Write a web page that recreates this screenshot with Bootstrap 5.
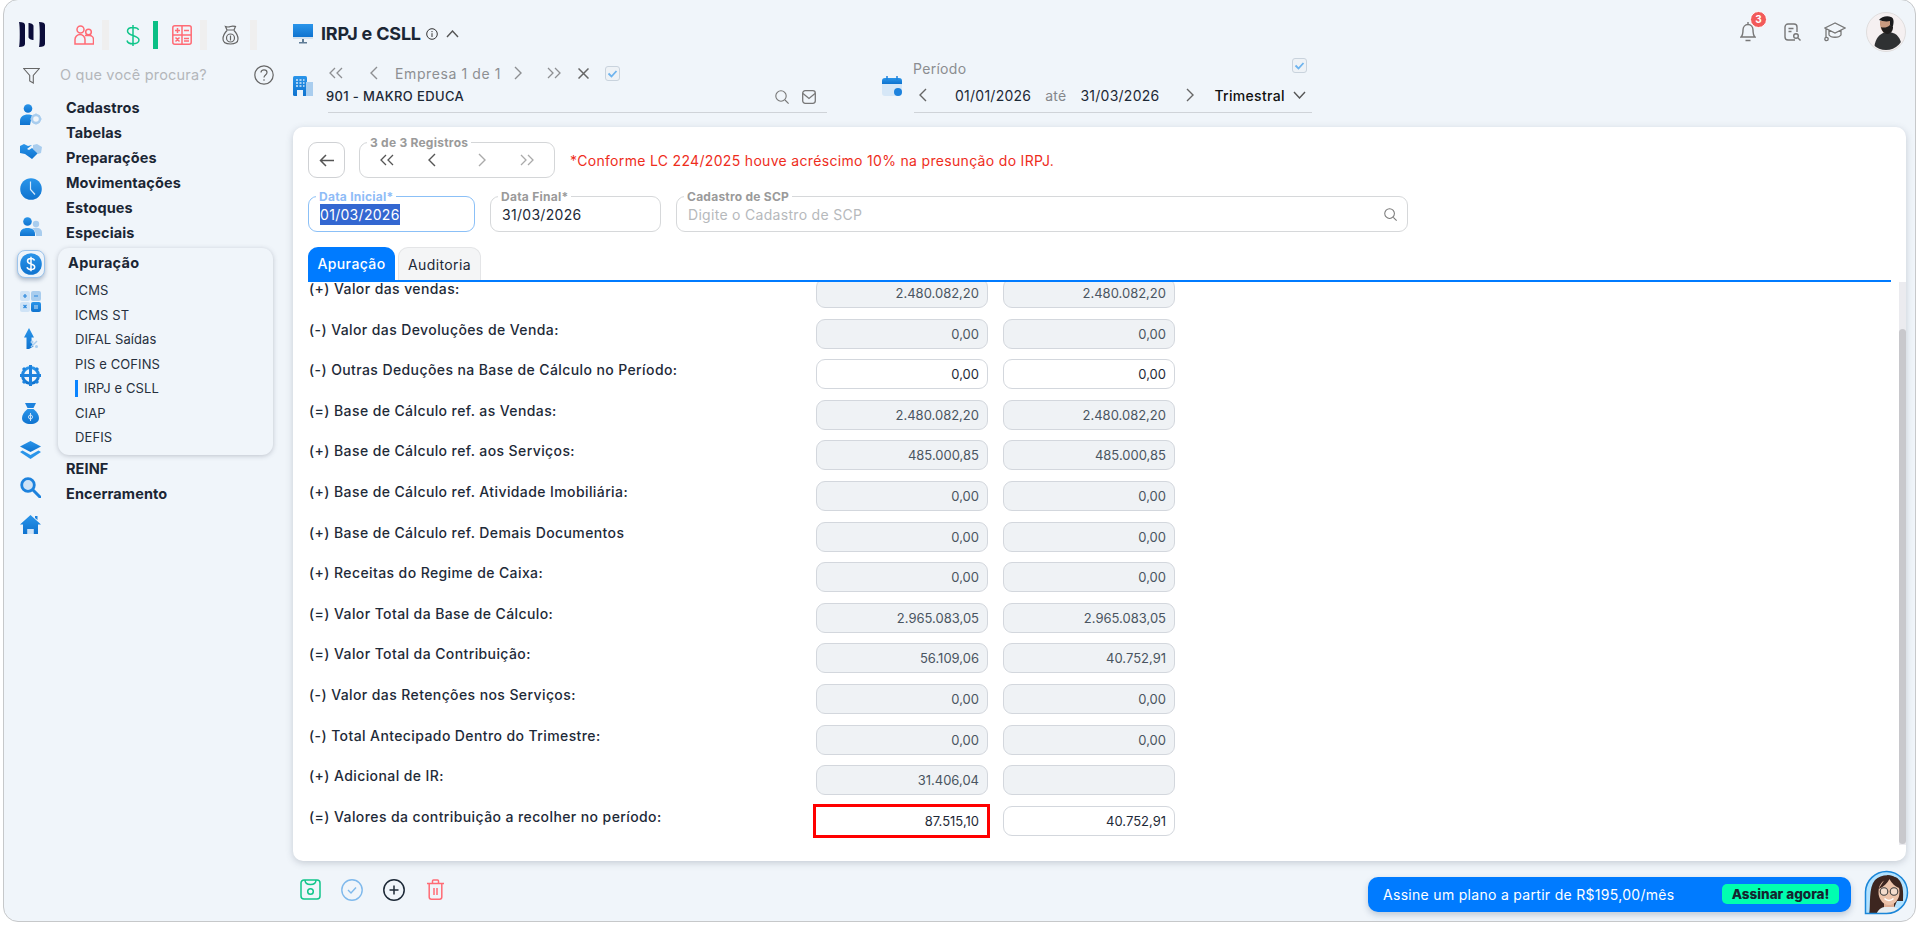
<!DOCTYPE html>
<html lang="pt-BR">

<head>
    <meta charset="UTF-8">
    <meta name="viewport" content="width=device-width, initial-scale=1.0">
    <title>IRPJ e CSLL</title>
    <link href="https://cdn.jsdelivr.net/npm/bootstrap@5.3.0/dist/css/bootstrap.min.css" rel="stylesheet">
    <style>
        html, body { height: 100%; overflow: hidden; background: #fff; }
        body { font-family: Inter, "Liberation Sans", sans-serif; color: #1c2836; font-size: 14px; }
        .app-frame { margin: -1px 0 0 3px; width: 1913px; height: 923px; background: #f0f5fa; border: 1.5px solid #c6c8ca; border-radius: 15px; overflow: hidden; }

        /* sidebar */
        .side-col { width: 289px; flex: none; }
        .top-icons { height: 30px; margin-top: 20px; padding-left: 15px; }
        .top-icons svg { flex: none; }
        .grey-tab { width: 7px; height: 30px; background: #efefef; flex: none; }
        .green-tab { width: 5px; height: 28px; background: #0bbf85; flex: none; }
        .search-line { height: 26px; margin-top: 12px; padding-left: 19px; }
        .search-text { margin-left: 20px; width: 194px; color: #b4b7bb; font-size: 14.5px; letter-spacing: .2px; }
        .icon-col { width: 54px; flex: none; margin-top: 8px; }
        .icon-slot { height: 37.3px; padding-right: 1px; }
        .icon-active { width: 28px; height: 28px; border: 1px solid #9cc4ec; border-radius: 8px; box-shadow: 0 2px 4px rgba(40, 70, 110, .35); background: #eef4fa; }
        .menu-col { margin-top: 7px; padding-left: 8px; }
        .menu-main { height: 25px; line-height: 25px; font-weight: 700; font-size: 14.5px; color: #1b2634; letter-spacing: .1px; }
        .apur-panel { margin: 3px 0 1px -8px; width: 215px; height: 207px; border-radius: 11px; background: #f0f5fa; box-shadow: 0 1px 5px rgba(60, 70, 90, .28); padding: 3px 0 0 10px; }
        .apur-panel .menu-main { height: 24px; line-height: 24px; letter-spacing: .3px; }
        .apur-item { height: 24.5px; line-height: 24.5px; margin-left: 7px; font-size: 13px; color: #26303d; letter-spacing: .1px; }
        .apur-panel .apur-head { margin-bottom: 3px; }
        .apur-current { display: inline-block; border-left: 3px solid #0a84ff; height: 17px; line-height: 17px; padding-left: 6px; }

        /* header */
        .main-col { width: 1613px; flex: none; }
        .head-top { height: 39px; margin-top: 12.5px; }
        .head-left { padding-top: 3px; }
        .page-title { font-size: 18px; font-weight: 700; letter-spacing: -.2px; margin: 0 5px 0 8px; color: #1b2634; line-height: 1; }
        .bell-wrap { width: 18px; height: 22px; margin-right: 26px; }
        .bell-count { position: absolute; top: -10px; left: 10px; width: 17px; height: 17px; border-radius: 50%; background: #f25a5a; color: #fff; font-size: 10px; font-weight: 700; border: 1.5px solid #fff; line-height: 14px; text-align: center; }
        .head-pick { height: 57px; margin-top: 4.5px; }
        .emp-block { width: 535px; flex: none; }
        .emp-body { width: 499px; height: 57px; margin-left: 15px; border-bottom: 1px solid #cfd3d8; }
        .emp-nav { height: 22px; margin-top: 6px; padding-left: 1px; color: #8d8f92; font-size: 14px; letter-spacing: .6px; }
        .emp-name { height: 26px; margin-left: -2px; font-size: 13px; font-weight: 500; color: #1c2836; letter-spacing: .35px; }
        .tick-box { width: 15px; height: 15px; border: 1px solid #c9d3dd; border-radius: 3px; background: #eef2f6; line-height: 0; }
        .per-block { width: 430px; flex: none; margin-left: 54px; }
        .per-body { width: 398px; margin-left: 12px; border-bottom: 1px solid #cfd3d8; height: 57px; }
        .per-label { height: 25px; padding-top: 2px; color: #8b8d90; font-size: 14px; letter-spacing: .3px; }
        .per-row { height: 28px; font-size: 14px; letter-spacing: .25px; }
        .per-ate { color: #84878b; }
        .per-kind { font-weight: 500; font-size: 14px; color: #111; letter-spacing: .3px; }

        /* card */
        .work-card { height: 734px; margin-top: 14px; background: #fff; border-radius: 10px; box-shadow: 0 2px 7px rgba(70, 85, 105, .25); padding: 15px 0 0 15px; }
        .back-btn { width: 37px; height: 36px; border: 1px solid #cfd1d4; border-radius: 9px; background: #fff; padding: 0; margin-right: 14px; line-height: 0; }
        .reg-box { width: 196px; height: 36px; border: 1px solid #d4d6d8; border-radius: 9px; margin-right: 15px; padding-left: 20px; }
        .float-tag { position: absolute; top: -7px; left: 7px; background: #fff; padding: 0 3px; font-size: 12px; line-height: 13px; font-weight: 700; color: #9a9a9a; white-space: nowrap; letter-spacing: .25px; }
        .red-note { color: #ee2d1c; font-size: 14px; letter-spacing: .32px; }
        .field-row { margin-top: 18px; }
        .float-field { height: 36px; border: 1px solid #d6d8da; border-radius: 9px; padding: 7px 0 0 11px; margin-right: 15px; font-size: 14px; letter-spacing: .3px; line-height: 21px; }
        .f-start { width: 167px; border-color: #8bc0f7; }
        .f-start .float-tag { color: #8fbcf7; }
        .f-end { width: 171px; }
        .f-scp { width: 732px; margin: 0; color: #b6b9bc; padding-right: 10px; }
        .sel-val { background: #3367d1; color: #fff; display: inline-block; line-height: 21px; }
        .tab-row { margin: 15px 15px 0 0; height: 35px; border-bottom: 2px solid #007bff; gap: 3px; }
        .tab-on, .tab-off { height: 33px; border-radius: 10px 10px 0 0; font-size: 14px; padding: 0; line-height: 33px; text-align: center; letter-spacing: .4px; }
        .tab-on { width: 87px; background: #007bff; color: #fff; font-weight: 500; border: 0; }
        .tab-off { width: 83px; background: #f4f5f6; border: 1px solid #e4e5e7; border-bottom: 0; color: #1c2836; }
        .value-wrap { height: 563px; }
        .value-area { overflow: hidden; }
        .value-rows { margin-top: -4px; }
        .fake-track { width: 7px; flex: none; background: #ebebef; }
        .fake-thumb { height: 515px; margin-top: 47px; background: #c8c8cc; border-radius: 4px; }
        .value-row { height: 40.6px; }
        .value-label { width: 508px; flex: none; padding: 4px 0 0 1px; line-height: 14px; font-size: 14px; font-weight: 500; color: #1e2a38; letter-spacing: .4px; }
        .value-input { height: 30px; width: 172px; flex: none; margin-right: 15px; padding: 0 8px; border: 1px solid #d3d7dd; border-radius: 9px; background: #fff; text-align: right; font-size: 13px; color: #1e2a38; outline: none; font-family: inherit; }
        .value-input[readonly] { background: #eff2f5; color: #4a5561; }
        .value-input.value-red { width: 173px; margin-left: -1px; outline: 3px solid #f00; outline-offset: -1px; border-radius: 0; background: #fff; color: #1e2a38; }

        /* footer */
        .foot-row { height: 60px; padding-top: 15.5px; }
        .foot-icons { gap: 20px; padding-left: 7px; margin-top: 2px; }
        .promo-bar { width: 483px; height: 35px; margin-left: auto; background: #007bff; border-radius: 10px; color: #fff; font-size: 14px; padding: 0 12px 0 15px; box-shadow: 0 3px 6px rgba(40, 70, 110, .25); letter-spacing: .3px; }
        .promo-btn { background: #00ffb0; color: #16242f; border: 0; height: 20px; line-height: 20px; border-radius: 5px; font-weight: 800; font-size: 13.5px; padding: 0; width: 117px; letter-spacing: 0; }
        .promo-face { width: 45px; height: 45px; margin: -7px -3px 0 13px; flex: none; }
    </style>
</head>

<body>
    <svg width="0" height="0" class="d-block">
        <defs>
            <linearGradient id="blueGrad" x1="0" y1="0" x2="0" y2="1"><stop offset="0" stop-color="#2a95ea"/><stop offset="1" stop-color="#0f73cf"/></linearGradient>
            <symbol id="dbl-left" viewBox="0 0 14 12"><path d="M6 1 1 6l5 5M13 1 8 6l5 5" fill="none" stroke="currentColor" stroke-width="1.3"/></symbol>
            <symbol id="dbl-right" viewBox="0 0 14 12"><path d="m1 1 5 5-5 5M8 1l5 5-5 5" fill="none" stroke="currentColor" stroke-width="1.3"/></symbol>
            <symbol id="one-left" viewBox="0 0 8 14"><path d="M7 1 1 7l6 6" fill="none" stroke="currentColor" stroke-width="1.4"/></symbol>
            <symbol id="one-right" viewBox="0 0 8 14"><path d="m1 1 6 6-6 6" fill="none" stroke="currentColor" stroke-width="1.4"/></symbol>
            <symbol id="tick" viewBox="0 0 13 13"><path d="m2.500 6.500 3 3 5-5.500" fill="none" stroke="#6db3ee" stroke-width="1.800"/></symbol>
        </defs>
    </svg>

    <div class="app-frame d-flex">
        <!-- menu lateral -->
        <div class="side-col">
            <div class="top-icons d-flex align-items-center">
                <svg width="26" height="26" viewBox="0 0 26 26"><path d="M0 0c4 0 6 1 6 3v19c0 2-2 3-6 3 1-4 1-21 0-25zM9.500 1c2 0 5 1 5 3v14c-2 0-5-1-5-3zM20 0c4 0 6 1 6 3v19c0 2-2 3-6 3 1-4 1-21 0-25z" fill="#0c0d3a"/></svg>
                <svg width="20" height="20" viewBox="0 0 20 20" fill="none" stroke="#ff6b75" stroke-width="1.500" style="margin-left:29px"><circle cx="6.500" cy="4.500" r="3.500"/><circle cx="14.500" cy="7" r="2.800"/><path d="M1 19v-4.500a5 5 0 0 1 10 0V19zM11 10.500h4.500a4 4 0 0 1 4 4V19H11"/></svg>
                <div class="grey-tab ms-2"></div>
                <svg width="14" height="21" viewBox="0 0 14 21" fill="none" stroke="#10c58a" stroke-width="1.500" style="margin-left:17px"><path d="M7 0v21M12.500 5C12 3 10 2.500 7 2.500 4 2.500 1.500 3.500 1.500 6S4 9.500 7 10.500s6 2 6 4.500-3 3.800-6 3.800-5.500-1-6-3.300"/></svg>
                <div class="green-tab" style="margin-left:13px"></div>
                <svg width="20" height="20" viewBox="0 0 20 20" fill="none" stroke="#ff6b75" stroke-width="1.500" style="margin-left:14px"><rect x=".8" y=".8" width="18.400" height="18.400" rx="2"/><path d="M10 1v18M1 10h18M3 5.500h5M5.500 3v5M12 5.500h5M3.500 12.500l4 4M7.500 12.500l-4 4M12 13.500h5M12 16h5"/></svg>
                <div class="grey-tab ms-2"></div>
                <svg width="17" height="20" viewBox="0 0 17 20" fill="none" stroke="#666" stroke-width="1.200" style="margin-left:15px"><path d="M5 5 3.500 1.500c2 .8 3 .8 5 0s3-.5 5 0L12 5M5 5h7M5 5.500C2.500 8 1 10.500 1 14c0 3.500 3 5 7.500 5S16 17.500 16 14c0-3.500-1.500-6-4-8.500"/><circle cx="8.500" cy="13" r="4"/><path d="M8.500 10.500v5"/></svg>
                <div class="grey-tab" style="margin-left:11px"></div>
            </div>
            <div class="search-line d-flex align-items-center">
                <svg width="17" height="17" viewBox="0 0 17 17" fill="none" stroke="#666" stroke-width="1.100"><path d="M.7 1.500h15.600l-6 7v7.500l-3.600-2v-5.500z"/></svg>
                <span class="search-text">O que você procura?</span>
                <svg width="20" height="20" viewBox="0 0 20 20" fill="none" stroke="#666" stroke-width="1.200"><circle cx="10" cy="10" r="9.200"/><path d="M7 7.500C7 5.500 8.500 4.800 10 4.800s3 1 3 2.700c0 2.500-3 2.500-3 5"/><path d="M10 14.200v1.500"/></svg>
            </div>
            <div class="d-flex">
                <div class="icon-col">
                    <div class="icon-slot d-flex align-items-center justify-content-center">
                        <svg width="22" height="21" viewBox="0 0 22 21"><circle cx="8" cy="4.500" r="4.300" fill="url(#blueGrad)"/><path d="M0 21v-4c0-4 3-6.500 8-6.500 2 0 3 .3 4 1l-2 9.500z" fill="url(#blueGrad)"/><circle cx="16" cy="15" r="4" fill="none" stroke="#a9cdee" stroke-width="2.400"/><path d="M16 9.500v2M16 18.500v2M10.500 15h2M19.500 15h2M12.500 11.500l1 1M18.500 17.500l1 1M19.500 11.500l-1 1M13.500 17.500l-1 1" stroke="#a9cdee" stroke-width="1.500"/></svg>
                    </div>
                    <div class="icon-slot d-flex align-items-center justify-content-center">
                        <svg width="22" height="16" viewBox="0 0 22 16"><path d="M0 2 4 0l4 2 4-1-5 4 2 1 3-2 6 5-6 6-7-5-5-1z" fill="url(#blueGrad)"/><path d="m13 1 4-1 5 3-1 6-3 1-5-5z" fill="#a9cdee"/></svg>
                    </div>
                    <div class="icon-slot d-flex align-items-center justify-content-center">
                        <svg width="22" height="22" viewBox="0 0 22 22"><circle cx="11" cy="11" r="10.800" fill="url(#blueGrad)"/><path d="M10.500 3.500v8l4.500 5" fill="none" stroke="#d5e8fa" stroke-width="1.200"/></svg>
                    </div>
                    <div class="icon-slot d-flex align-items-center justify-content-center">
                        <svg width="22" height="19" viewBox="0 0 22 19"><circle cx="7.500" cy="4.500" r="4.300" fill="url(#blueGrad)"/><path d="M0 19v-2c0-4 3-6 7.500-6s7.500 2 7.500 6v2z" fill="url(#blueGrad)"/><circle cx="16" cy="7" r="3.200" fill="#a9cdee"/><path d="M12 11.500c4-1.500 10-.5 10 4v3.500h-6c0-3-1-6-4-7.500z" fill="#a9cdee"/></svg>
                    </div>
                    <div class="icon-slot d-flex align-items-center justify-content-center">
                        <div class="icon-active d-flex align-items-center justify-content-center">
                            <svg width="22" height="22" viewBox="0 0 22 22"><circle cx="11" cy="11" r="10.800" fill="url(#blueGrad)"/><path d="M14.500 7.500C14 6 12.500 5.500 11 5.500 9 5.500 7.500 6.500 7.500 8s1.500 2.500 3.500 3 3.700 1.300 3.700 3-1.700 2.500-3.700 2.500-3.500-.7-4-2.300M11 3.800v14.400" fill="none" stroke="#fff" stroke-width="1.500"/></svg>
                        </div>
                    </div>
                    <div class="icon-slot d-flex align-items-center justify-content-center">
                        <svg width="21" height="21" viewBox="0 0 21 21"><rect width="10" height="10" rx="2" fill="#cfe3f6"/><rect x="11" width="10" height="10" rx="2" fill="#a9cdee"/><rect y="11" width="10" height="10" rx="2" fill="#cfe3f6"/><rect x="11" y="11" width="10" height="10" rx="2" fill="url(#blueGrad)"/><path d="M3 5h4M5 3v4M14 5h4M3.500 14l3 3M6.500 14l-3 3" stroke="#2a88dd" stroke-width="1.200"/><path d="M14 15h4M14 17h4" stroke="#cfe3f6" stroke-width="1.200"/></svg>
                    </div>
                    <div class="icon-slot d-flex align-items-center justify-content-center">
                        <svg width="14" height="21" viewBox="0 0 14 21"><path d="M2.500 21V9.500H0L5 0l5 9.500H7.500c0 4 .5 7.500 2 9L5 21z" fill="url(#blueGrad)"/><path d="m7 19 6-6" stroke="#a9cdee" stroke-width="1.500"/><circle cx="8" cy="14" r="1.500" fill="#a9cdee"/><circle cx="12.500" cy="18.500" r="1.500" fill="#a9cdee"/></svg>
                    </div>
                    <div class="icon-slot d-flex align-items-center justify-content-center">
                        <svg width="21" height="21" viewBox="0 0 21 21"><circle cx="10.500" cy="10.500" r="8" fill="none" stroke="url(#blueGrad)" stroke-width="3"/><path d="M10.500 0v21M0 10.500h21" stroke="#1d82dd" stroke-width="3"/><path d="M3 3l2 2M16 16l2 2M3 18l2-2M16 5l2-2" stroke="#1d82dd" stroke-width="3"/></svg>
                    </div>
                    <div class="icon-slot d-flex align-items-center justify-content-center">
                        <svg width="17" height="21" viewBox="0 0 17 21"><path d="M3 0h11l-2.500 5h-6z" fill="#1d82dd"/><path d="M5.500 6h6C15 9 17 12 17 15c0 4-4 6-8.500 6S0 19 0 15c0-3 2-6 5.500-9z" fill="url(#blueGrad)"/><path d="M8.500 10v8" stroke="#cfe3f6" stroke-width="1"/><circle cx="8.500" cy="14" r="2" fill="none" stroke="#cfe3f6" stroke-width="1"/></svg>
                    </div>
                    <div class="icon-slot d-flex align-items-center justify-content-center">
                        <svg width="21" height="18" viewBox="0 0 21 18"><path d="M10.500 0 21 5.500 10.500 11 0 5.500z" fill="url(#blueGrad)"/><path d="M2.500 9.500 0 11l10.500 7L21 11l-2.500-1.500-8 4.500z" fill="#2a95ea"/></svg>
                    </div>
                    <div class="icon-slot d-flex align-items-center justify-content-center">
                        <svg width="21" height="21" viewBox="0 0 21 21"><circle cx="8" cy="8" r="6.300" fill="#cfe3f6" stroke="#1d82dd" stroke-width="2.800"/><path d="m13 13 7 7" stroke="#1d82dd" stroke-width="3" stroke-linecap="round"/></svg>
                    </div>
                    <div class="icon-slot d-flex align-items-center justify-content-center">
                        <svg width="21" height="19" viewBox="0 0 21 19"><path d="M10.500 0 21 9.500h-3V19h-4.500v-5h-6v5H3V9.500H0z" fill="url(#blueGrad)"/><path d="M15 1h2.500v4L15 3z" fill="#1d82dd"/><path d="M7.500 19v-5h6v5z" fill="#cfe3f6"/></svg>
                    </div>
                </div>
                <div class="menu-col flex-grow-1">
                    <div class="menu-main">Cadastros</div>
                    <div class="menu-main">Tabelas</div>
                    <div class="menu-main">Preparações</div>
                    <div class="menu-main">Movimentações</div>
                    <div class="menu-main">Estoques</div>
                    <div class="menu-main">Especiais</div>
                    <div class="apur-panel">
                        <div class="menu-main apur-head">Apuração</div>
                        <div class="apur-item">ICMS</div>
                        <div class="apur-item">ICMS ST</div>
                        <div class="apur-item">DIFAL Saídas</div>
                        <div class="apur-item">PIS e COFINS</div>
                        <div class="apur-item"><span class="apur-current">IRPJ e CSLL</span></div>
                        <div class="apur-item">CIAP</div>
                        <div class="apur-item">DEFIS</div>
                    </div>
                    <div class="menu-main">REINF</div>
                    <div class="menu-main">Encerramento</div>
                </div>
            </div>
        </div>

        <!-- conteudo -->
        <div class="main-col">
            <div class="head-top d-flex align-items-center">
                <div class="head-left d-flex align-items-center">
                    <svg width="20" height="20" viewBox="0 0 20 20"><rect x="0" y="0" width="20" height="13" fill="url(#blueGrad)"/><rect y="13" width="20" height="2" fill="#d5e2ee"/><path d="M9 15h2v3H9zM6 18h8v1.500H6z" fill="#607d96"/></svg>
                    <span class="page-title">IRPJ e CSLL</span>
                    <svg width="12" height="12" viewBox="0 0 12 12" fill="none" stroke="#333" stroke-width="1"><circle cx="6" cy="6" r="5.300"/><path d="M6 5.200v3.800M6 3v1.200"/></svg>
                    <svg class="ms-2" width="13" height="8" viewBox="0 0 13 8" fill="none" stroke="#555" stroke-width="1.400"><path d="m1 7 5.500-6L12 7"/></svg>
                </div>
                <div class="ms-auto d-flex align-items-center">
                    <div class="bell-wrap position-relative">
                        <svg class="d-block" width="16" height="21" viewBox="0 0 16 21" fill="none" stroke="#777" stroke-width="1.400"><path d="M8 1v2M1 16c2-2 2-4 2-7 0-3 2-5.500 5-5.500s5 2.500 5 5.500c0 3 0 5 2 7zM5.500 19.500h5"/></svg>
                        <span class="bell-count">3</span>
                    </div>
                    <svg width="17" height="18" viewBox="0 0 17 18" fill="none" stroke="#777" stroke-width="1.400"><path d="M11 17H4a3 3 0 0 1-3-3V4a3 3 0 0 1 3-3h6a3 3 0 0 1 3 3v5M4.500 5.500h5M4.500 8.500h3"/><circle cx="12" cy="13" r="2.300"/><path d="m14 15 2.500 2.500"/></svg>
                    <svg style="margin-left:23px" width="22" height="20" viewBox="0 0 22 20" fill="none" stroke="#777" stroke-width="1.300"><path d="M11 1 1 6l10 5 10-5zM5 8.500V13c2 3 10 3 12 0V8.500M2 6.500v9"/><circle cx="2.500" cy="17" r="1.700"/></svg>
                    <svg style="margin-left:20px" width="40" height="40" viewBox="0 0 40 40"><defs><clipPath id="manClip"><circle cx="20" cy="20" r="18"/></clipPath></defs><circle cx="20" cy="20" r="19.500" fill="#f5f0f1" stroke="#dfdddd" stroke-width="1"/><g clip-path="url(#manClip)"><path d="M8 40c0-10 3-16 9-19l4-2 6 2c6 2 9 8 9 19z" fill="#2f3133"/><path d="M14 9h11v7c0 2-1 4-3 5h-4l-3-4-1-4z" fill="#c99a80"/><path d="M13 8c2-3 8-5 12-3 3 1 3 5 2 9l-1 2-2-3V9c-4 1-8 0-11-1z" fill="#1a1a1c"/><path d="M15 15c2 1 6 1 9-2l3 2c0 4-2 6-5 7-3 0-6-2-7-7z" fill="#201e1e"/></g></svg>
                </div>
            </div>
            <div class="head-pick d-flex">
                <div class="emp-block d-flex">
                    <svg class="flex-none" width="20" height="20" viewBox="0 0 20 20" style="margin-top:20px"><rect width="14" height="20" rx="1.500" fill="url(#blueGrad)"/><rect x="13" y="6" width="7" height="14" fill="#a9cdee"/><rect x="4" y="14" width="6" height="6" fill="#e9f2fa"/><path d="M3 4h2M6.500 4h2M10 4h1.500M3 7h2M6.500 7h2M10 7h1.500M3 10h2M6.500 10h2M10 10h1.500" stroke="#d5e8fa" stroke-width="1.500"/></svg>
                    <div class="emp-body">
                        <div class="emp-nav d-flex align-items-center">
                            <svg width="14" height="12"><use href="#dbl-left"/></svg>
                            <svg width="8" height="14" style="margin-left:27px"><use href="#one-left"/></svg>
                            <span style="margin-left:17px">Empresa 1 de 1</span>
                            <svg width="8" height="14" style="margin-left:13px"><use href="#one-right"/></svg>
                            <svg width="14" height="12" style="margin-left:25px"><use href="#dbl-right"/></svg>
                            <svg width="11" height="11" viewBox="0 0 11 11" style="margin-left:17px" fill="none" stroke="#666" stroke-width="1.500"><path d="m.5.500 10 10M10.500.500l-10 10"/></svg>
                            <div class="tick-box" style="margin-left:16px"><svg width="13" height="13"><use href="#tick"/></svg></div>
                        </div>
                        <div class="emp-name d-flex align-items-center">
                            <span>901 - MAKRO EDUCA</span>
                            <svg class="ms-auto" width="14" height="14" viewBox="0 0 14 14" fill="none" stroke="#777" stroke-width="1.100"><circle cx="6" cy="6" r="5.200"/><path d="m10 10 3.600 3.600"/></svg>
                            <svg style="margin:0 11px 0 13px" width="14" height="14" viewBox="0 0 14 14" fill="none" stroke="#777" stroke-width="1.300"><rect x=".7" y=".7" width="12.600" height="12.600" rx="2.500"/><path d="m1 3.500 6 5 6-5"/></svg>
                        </div>
                    </div>
                </div>
                <div class="per-block d-flex">
                    <svg class="flex-none" style="margin-top:20px" width="20" height="20" viewBox="0 0 20 20"><rect y="2" width="20" height="18" rx="3" fill="#d6e7f7"/><path d="M0 8V5a3 3 0 0 1 3-3h14a3 3 0 0 1 3 3v3z" fill="url(#blueGrad)"/><path d="M5 0v4M15 0v4" stroke="#1d82dd" stroke-width="1.500"/><circle cx="16" cy="16" r="4" fill="#1d82dd"/></svg>
                    <div class="per-body flex-grow-1">
                        <div class="per-label d-flex justify-content-between">
                            <span style="margin-left:-1px">Período</span>
                            <div class="tick-box" style="margin:0 5px 0 0"><svg width="13" height="13"><use href="#tick"/></svg></div>
                        </div>
                        <div class="per-row d-flex align-items-center">
                            <svg style="color:#666;margin-left:5px" width="8" height="14"><use href="#one-left"/></svg>
                            <span style="margin-left:28px">01/01/2026</span>
                            <span class="per-ate" style="margin-left:14px">até</span>
                            <span style="margin-left:14px">31/03/2026</span>
                            <svg style="color:#666;margin-left:27px" width="8" height="14"><use href="#one-right"/></svg>
                            <span class="per-kind" style="margin-left:20px">Trimestral</span>
                            <svg class="ms-2" width="13" height="8" viewBox="0 0 13 8" fill="none" stroke="#555" stroke-width="1.400"><path d="m1 1 5.500 6L12 1"/></svg>
                        </div>
                    </div>
                </div>
            </div>

            <div class="work-card">
                <div class="d-flex align-items-center">
                    <button class="back-btn" type="button">
                        <svg width="15" height="13" viewBox="0 0 15 13" fill="none" stroke="#555" stroke-width="1.500"><path d="M7 1 1.500 6.500 7 12M1.500 6.500H15"/></svg>
                    </button>
                    <div class="reg-box position-relative d-flex align-items-center text-secondary">
                        <span class="float-tag">3 de 3 Registros</span>
                        <svg width="14" height="12" style="color:#555"><use href="#dbl-left"/></svg>
                        <svg width="8" height="14" style="margin-left:34px;color:#555"><use href="#one-left"/></svg>
                        <svg width="8" height="14" style="margin-left:42px;color:#aaa"><use href="#one-right"/></svg>
                        <svg width="14" height="12" style="margin-left:34px;color:#aaa"><use href="#dbl-right"/></svg>
                    </div>
                    <span class="red-note">*Conforme LC 224/2025 houve acréscimo 10% na presunção do IRPJ.</span>
                </div>
                <div class="field-row d-flex">
                    <div class="float-field f-start position-relative">
                        <span class="float-tag">Data Inicial*</span>
                        <span class="sel-val">01/03/2026</span>
                    </div>
                    <div class="float-field f-end position-relative">
                        <span class="float-tag">Data Final*</span>
                        31/03/2026
                    </div>
                    <div class="float-field f-scp position-relative d-flex align-items-start justify-content-between">
                        <span class="float-tag">Cadastro de SCP</span>
                        <span>Digite o Cadastro de SCP</span>
                        <svg class="mt-1" width="13" height="13" viewBox="0 0 14 14" fill="none" stroke="#777" stroke-width="1.100"><circle cx="6" cy="6" r="5.200"/><path d="m10 10 3.600 3.600"/></svg>
                    </div>
                </div>
                <div class="tab-row d-flex align-items-end">
                    <div class="tab-on">Apuração</div>
                    <div class="tab-off">Auditoria</div>
                </div>
                <div class="value-wrap d-flex">
                    <div class="value-area flex-grow-1">
                        <div class="value-rows" id="value-rows"></div>
                    </div>
                    <div class="fake-track"><div class="fake-thumb"></div></div>
                </div>
            </div>

            <div class="foot-row d-flex align-items-start">
                <div class="foot-icons d-flex align-items-center">
                    <svg width="21" height="21" viewBox="0 0 21 21" fill="none" stroke="#10c58a" stroke-width="1.500"><path d="M4 1h13a3 3 0 0 1 3 3v13a3 3 0 0 1-3 3H4a3 3 0 0 1-3-3V4a3 3 0 0 1 3-3zM5 1c0 3 2 4.500 5.500 4.500S16 4 16 1"/><circle cx="10.500" cy="12.500" r="2.800"/></svg>
                    <svg width="22" height="22" viewBox="0 0 22 22" fill="none" stroke="#7fb9ec" stroke-width="1.400"><circle cx="11" cy="11" r="10.200"/><path d="m7 11 3 3 5-5.500"/></svg>
                    <svg width="22" height="22" viewBox="0 0 22 22" fill="none" stroke="#1c2836" stroke-width="1.500"><circle cx="11" cy="11" r="10.200"/><path d="M11 6.500v9M6.500 11h9"/></svg>
                    <svg width="17" height="21" viewBox="0 0 17 21" fill="none" stroke="#ff6b75" stroke-width="1.500" style="margin-left:2px"><path d="M0 4.500h17M5.500 4V2a1 1 0 0 1 1-1h4a1 1 0 0 1 1 1v2M2.200 5v13a2.200 2.200 0 0 0 2.200 2.200h8.200a2.200 2.200 0 0 0 2.200-2.200V5M7 9v7M10 9v7"/></svg>
                </div>
                <div class="promo-bar d-flex align-items-center justify-content-between">
                    <span>Assine um plano a partir de R$195,00/mês</span>
                    <button class="promo-btn" type="button">Assinar agora!</button>
                </div>
                <svg class="promo-face" viewBox="0 0 45 45"><defs><clipPath id="womanClip"><path d="M1.500 43.500V22a21 21 0 1 1 21 21.500z"/></clipPath></defs><path d="M1.500 43.500V22a21 21 0 1 1 21 21.500z" fill="#b2e2ff"/><g clip-path="url(#womanClip)"><path d="M5 45c2-9-1-27 6-35 6-6 19-7 25 1 4 6 3 14 3 20h-6l-6 14z" fill="#3d2620"/><path d="M20 30h10v9H20z" fill="#dfae94"/><ellipse cx="25" cy="22" rx="10.500" ry="13" fill="#ecc3aa"/><path d="M14.500 19c5-2 9-6 11-10 2 4 6 8 10 9l-2-10-10-3z" fill="#3d2620"/><path d="M12 45c2-6 6-8 10-8h6c5 0 9 3 11 8z" fill="#e8ecee"/><circle cx="20" cy="21.500" r="3.800" fill="#f3dccd" stroke="#3e3e3e" stroke-width="1.100"/><circle cx="30" cy="21.500" r="3.800" fill="#f3dccd" stroke="#3e3e3e" stroke-width="1.100"/><path d="M20.500 28.500c2.500 2.500 6.500 2.500 9 0" stroke="#fff" stroke-width="1.500" fill="none"/></g><path d="M1.500 43.500V22a21 21 0 1 1 21 21.500z" fill="none" stroke="#1b86d8" stroke-width="1.500"/></svg>
            </div>
        </div>
    </div>

    <script src="https://cdn.jsdelivr.net/npm/bootstrap@5.3.0/dist/js/bootstrap.bundle.min.js"></script>
    <script>
        // [label, coluna 1, coluna 2, editavel]
        const rows = [
            ["(+) Valor das vendas:", "2.480.082,20", "2.480.082,20"],
            ["(-) Valor das Devoluções de Venda:", "0,00", "0,00"],
            ["(-) Outras Deduções na Base de Cálculo no Período:", "0,00", "0,00", true],
            ["(=) Base de Cálculo ref. as Vendas:", "2.480.082,20", "2.480.082,20"],
            ["(+) Base de Cálculo ref. aos Serviços:", "485.000,85", "485.000,85"],
            ["(+) Base de Cálculo ref. Atividade Imobiliária:", "0,00", "0,00"],
            ["(+) Base de Cálculo ref. Demais Documentos", "0,00", "0,00"],
            ["(+) Receitas do Regime de Caixa:", "0,00", "0,00"],
            ["(=) Valor Total da Base de Cálculo:", "2.965.083,05", "2.965.083,05"],
            ["(=) Valor Total da Contribuição:", "56.109,06", "40.752,91"],
            ["(-) Valor das Retenções nos Serviços:", "0,00", "0,00"],
            ["(-) Total Antecipado Dentro do Trimestre:", "0,00", "0,00"],
            ["(+) Adicional de IR:", "31.406,04", ""],
            ["(=) Valores da contribuição a recolher no período:", "87.515,10", "40.752,91", "total"]
        ];
        const box = document.getElementById("value-rows");
        rows.forEach(function (r) {
            const ro = r[3] ? "" : "readonly";
            const red = r[3] === "total" ? "value-red" : "";
            box.insertAdjacentHTML("beforeend",
                `<div class="value-row d-flex">
                    <div class="value-label">${r[0]}</div>
                    <input class="value-input ${red}" ${ro} value="${r[1]}">
                    <input class="value-input" ${ro} value="${r[2]}">
                </div>`);
        });
    </script>
</body>

</html>
